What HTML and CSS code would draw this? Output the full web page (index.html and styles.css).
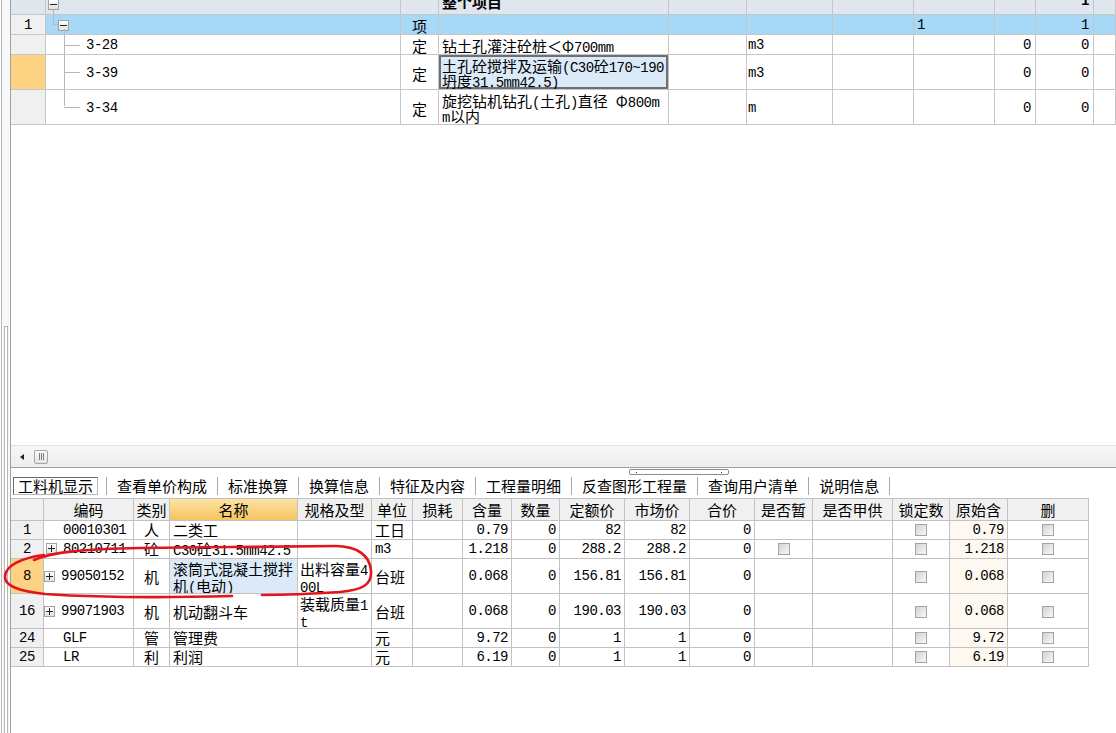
FILE: index.html
```html
<!DOCTYPE html>
<html lang="zh-CN">
<head>
<meta charset="utf-8">
<title>工料机显示</title>
<link rel="stylesheet" href="styles.css">
</head>
<body>
<div class="app">
  <div class="gutter"><div class="gutter-thumb"></div></div>
  <div class="main">
    <section class="top-pane">
      <div class="top-grid">
        <div class="rows">
          <div class="trow r0">
            <div class="cell rn"></div>
            <div class="cell tree t-root"><span class="tbox minus"></span></div>
            <div class="cell"></div>
            <div class="cell l bold">整个项目</div>
            <div class="cell"></div><div class="cell"></div><div class="cell"></div><div class="cell"></div><div class="cell"></div>
            <div class="cell r n bold">1</div>
            <div class="cell"></div>
          </div>
          <div class="trow r1 sel">
            <div class="cell rn c n">1</div>
            <div class="cell tree t-group"><span class="tbox minus"></span></div>
            <div class="cell c">项</div>
            <div class="cell"></div><div class="cell"></div><div class="cell"></div><div class="cell"></div>
            <div class="cell l n">1</div>
            <div class="cell"></div>
            <div class="cell r n">1</div>
            <div class="cell"></div>
          </div>
          <div class="trow r2">
            <div class="cell rn"></div>
            <div class="cell tree t-leaf"><span class="code n">3-28</span></div>
            <div class="cell c">定</div>
            <div class="cell l wrap"><span>钻土孔灌注砼桩＜Φ<span class="lat">700mm</span></span></div>
            <div class="cell"></div>
            <div class="cell u n">m3</div>
            <div class="cell"></div><div class="cell"></div>
            <div class="cell r n">0</div>
            <div class="cell r n">0</div>
            <div class="cell"></div>
          </div>
          <div class="trow r3">
            <div class="cell rn cur"></div>
            <div class="cell tree t-leaf"><span class="code n">3-39</span></div>
            <div class="cell c">定</div>
            <div class="cell l wrap focus"><span>土孔砼搅拌及运输<span class="lat">(C30</span>砼<span class="lat">170~190</span><br>坍度<span class="lat">31.5mm42.5)</span></span></div>
            <div class="cell"></div>
            <div class="cell u n">m3</div>
            <div class="cell"></div><div class="cell"></div>
            <div class="cell r n">0</div>
            <div class="cell r n">0</div>
            <div class="cell"></div>
          </div>
          <div class="trow r4">
            <div class="cell rn"></div>
            <div class="cell tree t-last"><span class="code n">3-34</span></div>
            <div class="cell c">定</div>
            <div class="cell l wrap"><span>旋挖钻机钻孔<span class="lat">(</span>土孔<span class="lat">)</span>直径<span class="lat"> </span>Φ<span class="lat">800m</span><br><span class="lat">m</span>以内</span></div>
            <div class="cell"></div>
            <div class="cell u n">m</div>
            <div class="cell"></div><div class="cell"></div>
            <div class="cell r n">0</div>
            <div class="cell r n">0</div>
            <div class="cell"></div>
          </div>
        </div>
      </div>
      <div class="hscroll">
        <span class="arrow-left"></span>
        <span class="thumb"><span class="grip"></span></span>
      </div>
    </section>

    <nav class="tabs">
      <span class="splitter-grip"></span>
      <span class="tab active">工料机显示</span>
      <span class="tab">查看单价构成</span>
      <span class="tab">标准换算</span>
      <span class="tab">换算信息</span>
      <span class="tab">特征及内容</span>
      <span class="tab">工程量明细</span>
      <span class="tab">反查图形工程量</span>
      <span class="tab">查询用户清单</span>
      <span class="tab last">说明信息</span>
    </nav>

    <section class="bgrid">
      <div class="brow bhead">
        <div class="bc"></div>
        <div class="bc c">编码</div>
        <div class="bc c">类别</div>
        <div class="bc c hl">名称</div>
        <div class="bc c">规格及型</div>
        <div class="bc c">单位</div>
        <div class="bc c">损耗</div>
        <div class="bc c">含量</div>
        <div class="bc c">数量</div>
        <div class="bc c">定额价</div>
        <div class="bc c">市场价</div>
        <div class="bc c">合价</div>
        <div class="bc c">是否暂</div>
        <div class="bc c">是否甲供</div>
        <div class="bc c">锁定数</div>
        <div class="bc c">原始含</div>
        <div class="bc c">删</div>
      </div>

      <div class="brow h19">
        <div class="bc rn c n">1</div>
        <div class="bc code-cell nobox n">00010301</div>
        <div class="bc c">人</div>
        <div class="bc l">二类工</div>
        <div class="bc"></div>
        <div class="bc l">工日</div>
        <div class="bc"></div>
        <div class="bc r n">0.79</div>
        <div class="bc r n">0</div>
        <div class="bc r n">82</div>
        <div class="bc r n">82</div>
        <div class="bc r n">0</div>
        <div class="bc"></div>
        <div class="bc"></div>
        <div class="bc c"><span class="cb"></span></div>
        <div class="bc r n cream">0.79</div>
        <div class="bc c"><span class="cb"></span></div>
      </div>

      <div class="brow h19">
        <div class="bc rn c n">2</div>
        <div class="bc code-cell"><span class="tbox plus"></span><span class="n">80210711</span></div>
        <div class="bc c">砼</div>
        <div class="bc l"><span><span class="lat">C30</span>砼<span class="lat">31.5mm42.5</span></span></div>
        <div class="bc"></div>
        <div class="bc l n">m3</div>
        <div class="bc"></div>
        <div class="bc r n">1.218</div>
        <div class="bc r n">0</div>
        <div class="bc r n">288.2</div>
        <div class="bc r n">288.2</div>
        <div class="bc r n">0</div>
        <div class="bc c"><span class="cb"></span></div>
        <div class="bc"></div>
        <div class="bc c"><span class="cb"></span></div>
        <div class="bc r n cream">1.218</div>
        <div class="bc c"><span class="cb"></span></div>
      </div>

      <div class="brow h35">
        <div class="bc rn c n cur">8</div>
        <div class="bc code-cell"><span class="tbox plus"></span><span class="n">99050152</span></div>
        <div class="bc c">机</div>
        <div class="bc l wrap selcell"><span>滚筒式混凝土搅拌<br>机<span class="lat">(</span>电动<span class="lat">)</span></span></div>
        <div class="bc l wrap spec"><span>出料容量<span class="lat">4</span><br><span class="lat">00L</span></span></div>
        <div class="bc l">台班</div>
        <div class="bc"></div>
        <div class="bc r n">0.068</div>
        <div class="bc r n">0</div>
        <div class="bc r n">156.81</div>
        <div class="bc r n">156.81</div>
        <div class="bc r n">0</div>
        <div class="bc"></div>
        <div class="bc"></div>
        <div class="bc c"><span class="cb"></span></div>
        <div class="bc r n cream">0.068</div>
        <div class="bc c"><span class="cb"></span></div>
      </div>

      <div class="brow h35">
        <div class="bc rn c n">16</div>
        <div class="bc code-cell"><span class="tbox plus"></span><span class="n">99071903</span></div>
        <div class="bc c">机</div>
        <div class="bc l">机动翻斗车</div>
        <div class="bc l wrap spec"><span>装载质量<span class="lat">1</span><br><span class="lat">t</span></span></div>
        <div class="bc l">台班</div>
        <div class="bc"></div>
        <div class="bc r n">0.068</div>
        <div class="bc r n">0</div>
        <div class="bc r n">190.03</div>
        <div class="bc r n">190.03</div>
        <div class="bc r n">0</div>
        <div class="bc"></div>
        <div class="bc"></div>
        <div class="bc c"><span class="cb"></span></div>
        <div class="bc r n cream">0.068</div>
        <div class="bc c"><span class="cb"></span></div>
      </div>

      <div class="brow h19">
        <div class="bc rn c n">24</div>
        <div class="bc code-cell nobox n">GLF</div>
        <div class="bc c">管</div>
        <div class="bc l">管理费</div>
        <div class="bc"></div>
        <div class="bc l">元</div>
        <div class="bc"></div>
        <div class="bc r n">9.72</div>
        <div class="bc r n">0</div>
        <div class="bc r n">1</div>
        <div class="bc r n">1</div>
        <div class="bc r n">0</div>
        <div class="bc"></div>
        <div class="bc"></div>
        <div class="bc c"><span class="cb"></span></div>
        <div class="bc r n cream">9.72</div>
        <div class="bc c"><span class="cb"></span></div>
      </div>

      <div class="brow h19">
        <div class="bc rn c n">25</div>
        <div class="bc code-cell nobox n">LR</div>
        <div class="bc c">利</div>
        <div class="bc l">利润</div>
        <div class="bc"></div>
        <div class="bc l">元</div>
        <div class="bc"></div>
        <div class="bc r n">6.19</div>
        <div class="bc r n">0</div>
        <div class="bc r n">1</div>
        <div class="bc r n">1</div>
        <div class="bc r n">0</div>
        <div class="bc"></div>
        <div class="bc"></div>
        <div class="bc c"><span class="cb"></span></div>
        <div class="bc r n cream">6.19</div>
        <div class="bc c"><span class="cb"></span></div>
      </div>
    </section>
  </div>

  <svg class="markup" viewBox="0 0 1116 733" width="1116" height="733" aria-hidden="true">
    <path d="M 34 560 C 52 552, 84 549, 140 548 L 335 546 C 358 546, 370 556, 371 571 C 372 585, 362 590, 340 592 C 310 594, 282 595, 262 595" />
    <path d="M 44 555 C 20 558, 6 566, 5 576 C 4 586, 18 591, 45 594 C 90 597, 160 598, 232 596" />
  </svg>
</div>
</body>
</html>
```

FILE: styles.css
```css
* { box-sizing: border-box; }

html, body {
  margin: 0;
  padding: 0;
}

body {
  background: #ffffff;
  color: #000000;
  font-family: "Noto Sans CJK SC", "Liberation Sans", sans-serif;
  font-size: 15px;
}

.app {
  position: relative;
  display: flex;
  width: 1116px;
  height: 733px;
  overflow: hidden;
  background: #ffffff;
}

/* left frame edge */
.gutter {
  flex: none;
  width: 10px;
  margin-left: 1px;
  border-left: 1px solid #b8b8b8;
  border-right: 1px solid #a0a0a0;
  background: #f8f8f8;
  display: flex;
  flex-direction: column;
}

.gutter-thumb {
  flex: 1;
  margin: 326px 2px 0 2px;
  border-left: 1px solid #b4b4b4;
  border-right: 1px solid #b4b4b4;
  border-top: 1px solid #b4b4b4;
  background: #ffffff;
}

.main {
  flex: 1;
  min-width: 0;
  display: flex;
  flex-direction: column;
}

/* ---------- top tree grid ---------- */
.top-pane {
  flex: none;
  height: 468px;
  display: flex;
  flex-direction: column;
  border-bottom: 1px solid #a0a0a0;
}

.top-grid {
  flex: 1;
  overflow: hidden;
}

.rows {
  margin-top: -6px;
}

.trow {
  display: grid;
  grid-template-columns: 35px 355px 38px 230px 78px 86px 81px 81px 41px 58px 1fr;
}

.trow .cell {
  display: flex;
  align-items: center;
  overflow: hidden;
  white-space: nowrap;
  border-right: 1px solid #c6c6c6;
  border-bottom: 1px solid #c6c6c6;
  line-height: 15px;
  padding-top: 2px;
}

.r0 { height: 21px; background: #dfe6ee; }
.r0 .cell { padding-top: 0; padding-bottom: 5px; }
.r1, .r2 { height: 20px; }
.r3, .r4 { height: 35px; }

.sel { background: #a7d8f7; }
.rn { background: #f0f0f0; }
.r0 .rn { background: #dfe6ee; }
.rn.cur { background: #fdd282; }

.cell.c, .bc.c { justify-content: center; }
.cell.r, .bc.r { justify-content: flex-end; padding-right: 4px; }
.cell.l { padding-left: 3px; }
.cell.u { padding-left: 1px; }

.bold { font-weight: bold; }

.n, .lat {
  font-family: "Liberation Mono", "DejaVu Sans Mono", monospace;
  font-size: 14px;
  letter-spacing: -0.5px;
}

/* latin runs inside CJK text follow the CJK line grid */
.lat { line-height: 0; }

.wrap {
  white-space: normal !important;
  word-break: break-all;
}

.focus {
  background: #dbeaf9;
  box-shadow: inset 0 0 0 2px #6f6f6f;
}

/* tree connectors */
.tree { position: relative; }

.tree::before,
.tree::after {
  content: "";
  position: absolute;
  border-color: #bcb3bc;
  border-style: solid;
  border-width: 0;
}

.r0 .t-root { align-items: flex-start; padding: 0; }
.t-root .tbox { margin-left: 2px; margin-top: 5px; }
.t-root::after {
  left: 7px;
  top: 16px;
  bottom: -1px;
  border-left-width: 1px;
}

.t-group .tbox { margin-left: 12px; margin-top: -1px; }
.t-group::before {
  left: 7px;
  top: -1px;
  width: 6px;
  height: 10px;
  border-left-width: 1px;
  border-bottom-width: 1px;
}
.t-group::after {
  left: 18px;
  top: 14px;
  bottom: -1px;
  border-left-width: 1px;
}

.t-leaf::before {
  left: 18px;
  top: -1px;
  bottom: -1px;
  border-left-width: 1px;
}
.t-last::before {
  left: 18px;
  top: -1px;
  height: 50%;
  border-left-width: 1px;
}
.t-leaf::after,
.t-last::after {
  left: 18px;
  top: 50%;
  width: 16px;
  border-top-width: 1px;
}
.t-leaf .code,
.t-last .code { margin-left: 40px; }

.tbox {
  position: relative;
  flex: none;
  width: 11px;
  height: 11px;
  border: 1px solid #a2a2a2;
  background: linear-gradient(#ffffff, #e2e2e2);
}
.tbox::before {
  content: "";
  position: absolute;
  left: 1px;
  top: 4px;
  width: 7px;
  height: 1px;
  background: #222222;
}
.tbox.plus::after {
  content: "";
  position: absolute;
  left: 4px;
  top: 1px;
  width: 1px;
  height: 7px;
  background: #222222;
}

/* horizontal scrollbar */
.hscroll {
  flex: none;
  height: 22px;
  position: relative;
  display: flex;
  align-items: center;
  background: linear-gradient(#f6f6f6, #ededed);
  border-top: 1px solid #e2e2e2;
}

.arrow-left {
  width: 0;
  height: 0;
  margin-left: 9px;
  border-top: 3px solid transparent;
  border-bottom: 3px solid transparent;
  border-right: 4px solid #222222;
}

.thumb {
  display: flex;
  align-items: center;
  justify-content: center;
  width: 14px;
  height: 14px;
  margin-left: 10px;
  border: 1px solid #a6a6a6;
  border-radius: 2px;
  background: linear-gradient(#fafafa, #e4e4e4);
}

.grip {
  width: 5px;
  height: 7px;
  border-left: 1px solid #7a7a7a;
  border-right: 1px solid #7a7a7a;
  background: linear-gradient(to right, transparent 1px, #7a7a7a 1px, #7a7a7a 2px, transparent 2px);
}

/* ---------- tab strip ---------- */
.tabs {
  flex: none;
  position: relative;
  height: 30px;
  display: flex;
  align-items: flex-start;
  padding-top: 9px;
  background: #ffffff;
}

.splitter-grip {
  position: absolute;
  left: 618px;
  top: 1px;
  width: 100px;
  height: 6px;
  border: 1px solid #8c8c8c;
  border-radius: 2px;
  background: #ffffff;
}
.splitter-grip::before,
.splitter-grip::after {
  content: "";
  position: absolute;
  top: 2px;
  width: 1px;
  height: 1px;
  background: #333333;
}
.splitter-grip::before { left: 6px; }
.splitter-grip::after { right: 6px; }

.tab {
  height: 18px;
  line-height: 16px;
  padding: 1px 10px 0 10px;
  border-left: 1px solid #a8a8a8;
  white-space: nowrap;
}

.tab.active {
  margin: 0 8px 0 2px;
  padding: 0 4px;
  border: 1px solid;
  border-color: #6c6c6c #b8b8b8 #b8b8b8 #6c6c6c;
}

.tab.last { border-right: 1px solid #a8a8a8; }

/* ---------- bottom resource grid ---------- */
.bgrid {
  flex: none;
  width: 1078px;
  border-top: 1px solid #c0c0c0;
}

.brow {
  display: grid;
  grid-template-columns: 33px 90px 36px 128px 74px 41px 50px 49px 48px 65px 65px 65px 58px 80px 57px 58px 81px;
}

.bhead { height: 22px; background: #f0f0f0; }
.h19 { height: 19px; }
.h35 { height: 35px; }

.bc {
  display: flex;
  align-items: center;
  overflow: hidden;
  white-space: nowrap;
  border-right: 1px solid #c2c2c2;
  border-bottom: 1px solid #c2c2c2;
  line-height: 16px;
  padding-bottom: 1px;
}

.h35 .bc { line-height: 17px; padding: 1px 0 0 0; }
.bhead .bc { padding: 1px 0 0 0; }
.bhead .hl { background: linear-gradient(#fde3a4, #f6c35f); }

.bc.l { padding-left: 3px; }
.bc.spec { padding-left: 2px; }
.bc.r { padding-right: 3px; }

.code-cell { padding-left: 2px; }
.code-cell .tbox { margin-right: 6px; }
.code-cell.nobox { padding-left: 19px; }

.selcell { background: #dbeaf9; }
.cream { background: #fdf9f0; }

.cb {
  display: block;
  width: 12px;
  height: 12px;
  border: 1px solid #a4a4a4;
  background: linear-gradient(135deg, #d2d2d2, #f8f8f8);
}

/* hand-drawn red annotation */
.markup {
  position: absolute;
  left: 0;
  top: 0;
  pointer-events: none;
}
.markup path {
  fill: none;
  stroke: #e3141c;
  stroke-width: 2.6;
  stroke-linecap: round;
  stroke-linejoin: round;
}
```
